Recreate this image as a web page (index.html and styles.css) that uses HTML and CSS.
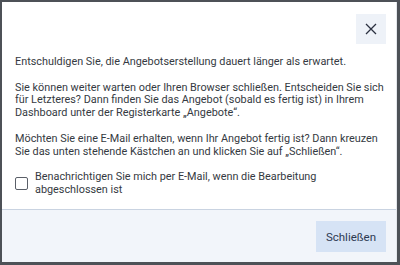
FILE: index.html
```html
<!DOCTYPE html>
<html>
<head>
  <meta charset="UTF-8">
  <link rel="stylesheet" href="styles.css">
</head>
<body>
  <div class="dialog">
    <div class="dialog-header">
      <button class="close-btn" aria-label="Schließen">
        <svg width="12" height="12" viewBox="0 0 12 12"><path d="M1 1 L11 11 M11 1 L1 11" stroke="#2b3140" stroke-width="1.3" fill="none"/></svg>
      </button>
    </div>
    <div class="dialog-body">
      <p>Entschuldigen Sie, die Angebotserstellung dauert länger als erwartet.</p>
      <p>Sie können weiter warten oder Ihren Browser schließen. Entscheiden Sie sich für Letzteres? Dann finden Sie das Angebot (sobald es fertig ist) in Ihrem Dashboard unter der Registerkarte „Angebote“.</p>
      <p>Möchten Sie eine E-Mail erhalten, wenn Ihr Angebot fertig ist? Dann kreuzen Sie das unten stehende Kästchen an und klicken Sie auf „Schließen“.</p>
      <label class="notify">
        <span class="checkbox"></span>
        <span>Benachrichtigen Sie mich per E-Mail, wenn die Bearbeitung<br>abgeschlossen ist</span>
      </label>
    </div>
    <div class="dialog-footer">
      <button class="btn">Schließen</button>
    </div>
  </div>
</body>
</html>
```

FILE: styles.css
```css
html,
body {
  margin: 0;
  height: 100%;
}

body {
  background: #4d5157;
  font-family: Roboto, "Noto Sans", sans-serif;
  color: #353a42;
  box-sizing: border-box;
  padding: 2px 3px 3px 2px;
}

button {
  border: none;
  background: none;
  margin: 0;
  padding: 0;
  font-family: inherit;
  cursor: pointer;
}

.dialog {
  background: #fff;
  height: 100%;
  display: flex;
  flex-direction: column;
  border-right: 1px solid #e4e7ec;
}

.dialog-header {
  display: flex;
  justify-content: flex-end;
  padding: 12px 10px 0 0;
}

.close-btn {
  width: 30px;
  height: 30px;
  background: #eef2f8;
  display: flex;
  align-items: center;
  justify-content: center;
}

.dialog-body {
  padding: 12px 8px 0 13px;
  font-size: 10.85px;
  line-height: 12.7px;
  flex: 1;
}

.dialog-body p {
  margin: 0 0 13px 0;
}

.notify {
  display: flex;
  align-items: flex-start;
  gap: 7px;
}

.checkbox {
  flex: none;
  width: 11px;
  height: 11px;
  border: 1px solid #5a5f68;
  border-radius: 2px;
  margin-top: 6px;
}

.dialog-footer {
  background: #f2f5fa;
  border-top: 1px solid #c9d3e1;
  display: flex;
  justify-content: flex-end;
  padding: 11px 10px 10px 0;
  height: 31px;
}

.btn {
  background: #d6e3f5;
  color: #2d3a52;
  font-size: 11.5px;
  width: 70px;
  height: 31px;
}
```
